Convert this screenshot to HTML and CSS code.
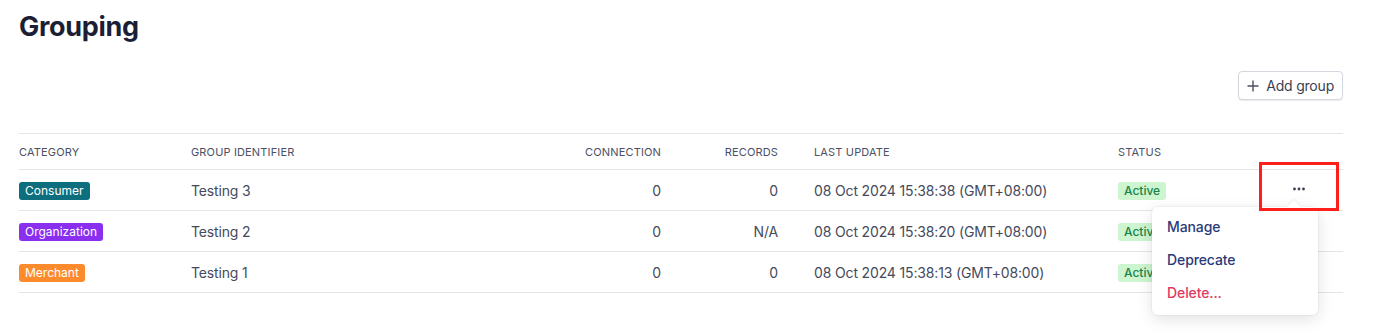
FILE: index.html
```html
<!DOCTYPE html>
<html lang="en">
<head>
    <meta charset="UTF-8">
    <meta name="viewport" content="width=device-width, initial-scale=1.0">
    <title>Grouping</title>
    <link rel="stylesheet" href="styles.css">
</head>
<body>
    <div class="page">
        <h1>Grouping</h1>

        <div class="toolbar">
            <button class="add-button">
                <svg width="12" height="12" viewBox="0 0 12 12"><path d="M6 0.5v11M0.5 6h11" stroke="#4a4f63" stroke-width="1.4" fill="none"/></svg>
                Add group
            </button>
        </div>

        <table class="groups">
            <colgroup>
                <col style="width: 172px">
                <col style="width: 390px">
                <col style="width: 80px">
                <col style="width: 117px">
                <col style="width: 340px">
                <col style="width: 137px">
                <col style="width: 88px">
            </colgroup>
            <thead>
                <tr>
                    <th>Category</th>
                    <th>Group identifier</th>
                    <th class="num">Connection</th>
                    <th class="num">Records</th>
                    <th class="date">Last update</th>
                    <th>Status</th>
                    <th></th>
                </tr>
            </thead>
            <tbody>
                <tr>
                    <td><span class="tag tag-consumer">Consumer</span></td>
                    <td>Testing 3</td>
                    <td class="num">0</td>
                    <td class="num">0</td>
                    <td class="date">08 Oct 2024 15:38:38 (GMT+08:00)</td>
                    <td><span class="status">Active</span></td>
                    <td class="actions">
                        <svg width="16" height="4" viewBox="0 0 16 4"><circle cx="3.5" cy="2" r="1.4" fill="#3a3f52"/><circle cx="8" cy="2" r="1.4" fill="#3a3f52"/><circle cx="12.5" cy="2" r="1.4" fill="#3a3f52"/></svg>
                    </td>
                </tr>
                <tr>
                    <td><span class="tag tag-org">Organization</span></td>
                    <td>Testing 2</td>
                    <td class="num">0</td>
                    <td class="num">N/A</td>
                    <td class="date">08 Oct 2024 15:38:20 (GMT+08:00)</td>
                    <td><span class="status">Active</span></td>
                    <td></td>
                </tr>
                <tr>
                    <td><span class="tag tag-merchant">Merchant</span></td>
                    <td>Testing 1</td>
                    <td class="num">0</td>
                    <td class="num">0</td>
                    <td class="date">08 Oct 2024 15:38:13 (GMT+08:00)</td>
                    <td><span class="status">Active</span></td>
                    <td></td>
                </tr>
            </tbody>
        </table>

        <!-- Row action menu -->
        <div class="menu">
            <div class="menu-item">Manage</div>
            <div class="menu-item">Deprecate</div>
            <div class="menu-item danger">Delete...</div>
        </div>

        <!-- Highlight box -->
        <div class="highlight"></div>
    </div>
</body>
</html>
```

FILE: styles.css
```css
/* General Styling */
body {
    margin: 0;
    font-family: 'Inter', 'Noto Sans', sans-serif;
    background: #ffffff;
    color: #454a5c;
}

.page {
    position: relative;
    padding: 0 32px 0 19px;
    height: 333px;
    overflow: hidden;
}

h1 {
    margin: 0;
    padding-top: 10px;
    font-size: 27px;
    line-height: 34px;
    font-weight: 700;
    color: #1b1f36;
    letter-spacing: -0.3px;
}

.toolbar {
    display: flex;
    justify-content: flex-end;
    margin-top: 27px;
    height: 28px;
    margin-bottom: 34px;
}

.add-button {
    display: flex;
    align-items: center;
    gap: 7px;
    height: 29px;
    padding: 0 8px 0 8px;
    background: #ffffff;
    border: 1px solid #d4d7de;
    border-radius: 4px;
    box-shadow: 0 1px 1px rgba(0, 0, 0, 0.08);
    font-family: inherit;
    font-size: 14px;
    letter-spacing: -0.2px;
    color: #3a3f52;
    cursor: pointer;
}

/* Table */
.groups {
    width: 1324px;
    border-collapse: collapse;
    table-layout: fixed;
    border-top: 1px solid #e3e5e9;
}

.groups th {
    height: 35px;
    padding: 0;
    text-align: left;
    font-size: 11px;
    font-weight: 400;
    text-transform: uppercase;
    letter-spacing: 0.15px;
    color: #4b5064;
    border-bottom: 1px solid #e3e5e9;
}

.groups td {
    height: 40px;
    padding: 0;
    font-size: 14px;
    letter-spacing: -0.15px;
    border-bottom: 1px solid #e3e5e9;
    white-space: nowrap;
}

.groups .num {
    text-align: right;
}

.groups .date {
    padding-left: 36px;
}

.actions {
    text-align: center;
    vertical-align: middle;
}

.actions svg {
    display: inline-block;
    vertical-align: middle;
    margin-bottom: 6px;
}

.tag {
    display: inline-block;
    height: 18px;
    line-height: 18px;
    padding: 0 6px;
    border-radius: 3px;
    font-size: 12px;
    font-weight: 400;
    letter-spacing: 0;
    color: #ffffff;
}

.tag-consumer { background: #0d6e7d; }
.tag-org { background: #8a2ef0; }
.tag-merchant { background: #fb8b2d; }

.status {
    display: inline-block;
    height: 18px;
    line-height: 18px;
    padding: 0 6px;
    border-radius: 3px;
    font-size: 12px;
    font-weight: 500;
    letter-spacing: 0;
    background: #cdf5d0;
    color: #17834a;
}

/* Popup menu */
.menu {
    position: absolute;
    left: 1152px;
    top: 207px;
    width: 166px;
    height: 108px;
    padding-top: 3px;
    box-sizing: border-box;
    background: #ffffff;
    border-radius: 6px;
    box-shadow: 0 0 0 1px rgba(0, 0, 0, 0.03), 0 4px 16px rgba(0, 0, 0, 0.12);
}

.menu::before {
    content: "";
    position: absolute;
    top: -5px;
    left: 137px;
    width: 10px;
    height: 10px;
    background: #ffffff;
    transform: rotate(45deg);
    box-shadow: -1px -1px 2px rgba(0, 0, 0, 0.05);
}

.menu-item {
    position: relative;
    height: 33px;
    line-height: 33px;
    padding-left: 15px;
    font-size: 14px;
    font-weight: 500;
    letter-spacing: -0.1px;
    color: #2a3b78;
}

.menu-item.danger {
    color: #df3862;
}

.highlight {
    position: absolute;
    left: 1259px;
    top: 162px;
    width: 80px;
    height: 49px;
    box-sizing: border-box;
    border: 3px solid #ff1f1a;
}
```
